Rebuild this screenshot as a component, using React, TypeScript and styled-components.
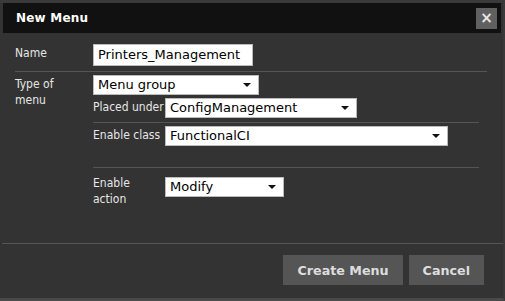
import styled, { createGlobalStyle } from "styled-components";

const Global = createGlobalStyle`
  html, body {
    margin: 0;
    background: #333;
  }
  body {
    font-family: "DejaVu Sans", Verdana, sans-serif;
  }
`;

const Dialog = styled.div`
  width: 505px;
  height: 301px;
  box-sizing: border-box;
  background: #333;
  border-top: 3px solid #3a3a3a;
  border-right: 2px solid #3a3a3a;
  border-bottom: 3px solid #4a4a4a;
  display: flex;
  flex-direction: column;
`;

const TitleBar = styled.div`
  height: 30px;
  margin: 0 2px 0 3px;
  background: #111;
  display: flex;
  align-items: center;
  justify-content: space-between;
  padding: 0 4px 0 13px;
`;

const Title = styled.span`
  color: #fff;
  font-weight: bold;
  font-size: 12px;
  letter-spacing: 0.2px;
`;

const CloseBtn = styled.button`
  width: 21px;
  height: 21px;
  border: none;
  padding: 0;
  background: #606060;
  color: #e8e8e8;
  font-size: 15px;
  font-weight: bold;
  line-height: 21px;
  font-family: "DejaVu Sans", sans-serif;
`;

const Form = styled.div`
  flex: 1;
  padding: 0 16px 0 15px;
`;

const Row = styled.div<{ $pad?: string; $noLine?: boolean }>`
  display: grid;
  grid-template-columns: 78px 1fr;
  padding: ${(p) => p.$pad || "0"};
  border-bottom: ${(p) => (p.$noLine ? "none" : "1px solid #555")};
`;

const Label = styled.div`
  color: #e6e6e6;
  font-family: "DejaVu Sans Condensed", "DejaVu Sans", sans-serif;
  font-size: 12px;
  line-height: 16px;
  padding-top: 1px;
`;

const TextInput = styled.div`
  width: 160px;
  height: 22px;
  box-sizing: border-box;
  background: #fff;
  border: 1px solid #bbb;
  color: #000;
  font-size: 13px;
  line-height: 20px;
  padding-left: 4px;
  white-space: nowrap;
`;

const Select = styled.div<{ $w: number; $mt?: number }>`
  width: ${(p) => p.$w}px;
  height: 20px;
  margin-top: ${(p) => p.$mt || 0}px;
  box-sizing: border-box;
  background: #fff;
  border: 1px solid #bbb;
  color: #000;
  font-size: 13px;
  line-height: 18px;
  padding: 0 7px 0 4px;
  display: flex;
  justify-content: space-between;
  align-items: center;
  white-space: nowrap;
`;

const Arrow = styled.span`
  width: 0;
  height: 0;
  border-left: 4px solid transparent;
  border-right: 4px solid transparent;
  border-top: 4px solid #111;
`;

const Nested = styled.div`
  display: flex;
  flex-direction: column;
  padding-right: 8px;
`;

const SubRow = styled.div<{ $h: number; $top: number; $line?: boolean }>`
  display: flex;
  align-items: flex-start;
  height: ${(p) => p.$h}px;
  padding-top: ${(p) => p.$top}px;
  box-sizing: border-box;
  border-bottom: ${(p) => (p.$line ? "1px solid #555" : "none")};
`;

const SubLabel = styled(Label)`
  width: 72px;
  flex: none;
`;

const Footer = styled.div`
  border-top: 1px solid #555;
  margin-left: 2px;
  height: 55px;
  display: flex;
  justify-content: flex-end;
  align-items: flex-start;
  gap: 6px;
  padding: 11px 19px 0 0;
  box-sizing: border-box;
`;

const Button = styled.button`
  height: 30px;
  background: #555;
  border: none;
  color: #ddd;
  font-family: "DejaVu Sans", Verdana, sans-serif;
  font-weight: bold;
  font-size: 12.7px;
  padding: 0 14px;
`;

export default function App() {
  return (
    <>
      <Global />
      <Dialog>
        <TitleBar>
          <Title>New Menu</Title>
          <CloseBtn>×</CloseBtn>
        </TitleBar>
        <Form>
          <Row $pad="11px 0 5px 0">
            <Label>Name</Label>
            <TextInput>Printers_Management</TextInput>
          </Row>
          <Row $pad="3px 0 0 0" $noLine>
            <Label>
              Type of
              <br />
              menu
            </Label>
            <Nested>
              <Select $w={166}>
                Menu group
                <Arrow />
              </Select>
              <SubRow $h={28} $top={3} $line>
                <SubLabel>Placed under</SubLabel>
                <Select $w={192}>
                  ConfigManagement
                  <Arrow />
                </Select>
              </SubRow>
              <SubRow $h={45} $top={3} $line>
                <SubLabel>Enable class</SubLabel>
                <Select $w={283}>
                  FunctionalCI
                  <Arrow />
                </Select>
              </SubRow>
              <SubRow $h={74} $top={6}>
                <SubLabel>
                  Enable
                  <br />
                  action
                </SubLabel>
                <Select $w={119} $mt={3}>
                  Modify
                  <Arrow />
                </Select>
              </SubRow>
            </Nested>
          </Row>
        </Form>
        <Footer>
          <Button>Create Menu</Button>
          <Button>Cancel</Button>
        </Footer>
      </Dialog>
    </>
  );
}
